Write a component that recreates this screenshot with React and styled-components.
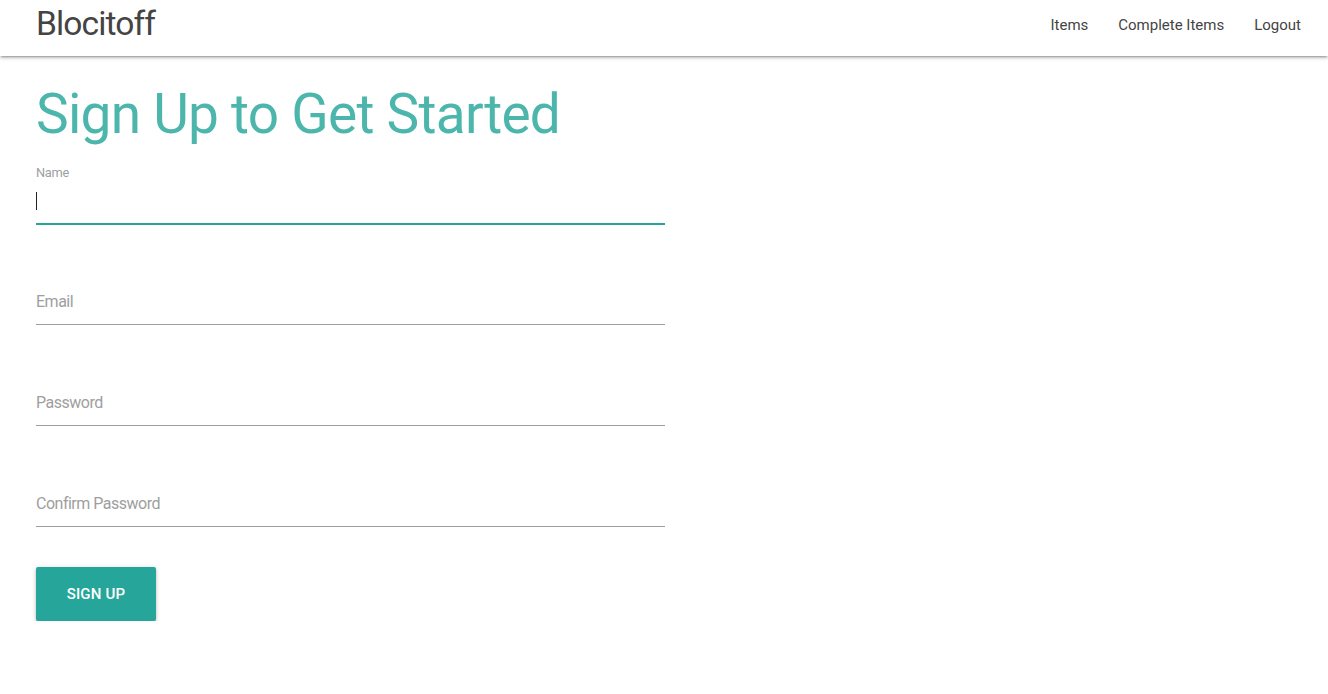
import React from "react";
import styled, { createGlobalStyle } from "styled-components";

const Global = createGlobalStyle`
  html, body { margin: 0; padding: 0; background: #fff; }
  body { font-family: Roboto, "Noto Sans", sans-serif; color: rgba(0,0,0,0.87); }
  * { box-sizing: border-box; }
`;

const NavBar = styled.nav`
  height: 56px;
  background: #fff;
  display: flex;
  justify-content: space-between;
  padding: 0 12px 0 36px;
  box-shadow: 0 2px 2px 0 rgba(0,0,0,.14), 0 3px 1px -2px rgba(0,0,0,.12), 0 1px 5px 0 rgba(0,0,0,.2);
  position: relative;
  z-index: 1;
`;

const Brand = styled.a`
  font-size: 33.6px;
  line-height: 48px;
  letter-spacing: -0.9px;
  color: #444;
  text-decoration: none;
  align-self: flex-start;
`;

const Links = styled.ul`
  display: flex;
  list-style: none;
  margin: 0;
  padding: 0;
`;

const LinkItem = styled.li`
  display: flex;
`;

const NavLink = styled.a`
  font-size: 15px;
  line-height: 50px;
  padding: 0 15px;
  color: #444;
  text-decoration: none;
`;

const Main = styled.main`
  padding: 0 36px;
`;

const Heading = styled.h2`
  font-size: 55px;
  line-height: 110%;
  letter-spacing: -0.75px;
  font-weight: 400;
  color: #4db6ac;
  margin: 28px 0 0 0;
`;

const Form = styled.form`
  width: 629px;
  display: flex;
  flex-direction: column;
  gap: 32px;
  margin-top: 30px;
`;

const Field = styled.div`
  position: relative;
  padding-bottom: 20px;
`;

const Input = styled.input`
  display: block;
  width: 100%;
  height: 49px;
  margin: 0;
  padding: 4px 0 0 0;
  border: none;
  border-bottom: 1px solid ${(p) => (p.$focused ? "#26a69a" : "#9e9e9e")};
  box-shadow: ${(p) => (p.$focused ? "0 1px 0 0 #26a69a" : "none")};
  outline: none;
  background: transparent;
  font-family: Roboto, "Noto Sans", sans-serif;
  font-size: 16px;
  letter-spacing: -0.5px;
  color: rgba(0,0,0,0.87);
  &::placeholder { color: #9e9e9e; opacity: 1; }
`;

const FloatLabel = styled.label`
  position: absolute;
  left: 0;
  top: -8px;
  font-size: 12.8px;
  line-height: 1;
  letter-spacing: -0.3px;
  color: #9e9e9e;
`;

const Caret = styled.span`
  position: absolute;
  left: 0;
  top: 17px;
  width: 1px;
  height: 18px;
  background: #222;
`;

const Button = styled.button`
  align-self: flex-start;
  margin-top: -12px;
  width: 120px;
  height: 54px;
  padding: 0;
  border: none;
  border-radius: 2px;
  background: #26a69a;
  color: #fff;
  font-family: Roboto, "Noto Sans", sans-serif;
  font-size: 15px;
  font-weight: 500;
  letter-spacing: .2px;
  text-transform: uppercase;
  box-shadow: 0 2px 2px 0 rgba(0,0,0,.14), 0 3px 1px -2px rgba(0,0,0,.12), 0 1px 5px 0 rgba(0,0,0,.2);
  cursor: pointer;
`;

const fields = [
  { name: "name", label: "Name", focused: true },
  { name: "email", label: "Email" },
  { name: "password", label: "Password", type: "password" },
  { name: "confirm", label: "Confirm Password", type: "password" },
];

export default function App() {
  return (
    <>
      <Global />
      <NavBar>
        <Brand href="#">Blocitoff</Brand>
        <Links>
          {["Items", "Complete Items", "Logout"].map((l) => (
            <LinkItem key={l}>
              <NavLink href="#">{l}</NavLink>
            </LinkItem>
          ))}
        </Links>
      </NavBar>
      <Main>
        <Heading>Sign Up to Get Started</Heading>
        <Form onSubmit={(e) => e.preventDefault()}>
          {fields.map((f) => (
            <Field key={f.name}>
              {f.focused ? (
                <>
                  <FloatLabel htmlFor={f.name}>{f.label}</FloatLabel>
                  <Input id={f.name} $focused type={f.type || "text"} />
                  <Caret />
                </>
              ) : (
                <Input id={f.name} type={f.type || "text"} placeholder={f.label} />
              )}
            </Field>
          ))}
          <Button type="submit">Sign Up</Button>
        </Form>
      </Main>
    </>
  );
}
